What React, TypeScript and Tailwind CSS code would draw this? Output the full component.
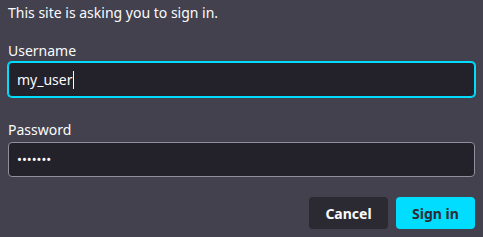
import React from "react";

export default function App() {
  return (
    <div
      className="w-[483px] h-[237px] bg-[#42414d] text-[#fbfbfe] px-2 pt-[3px] overflow-hidden"
      style={{ fontFamily: '"Noto Sans", "Open Sans", sans-serif' }}
    >
      <p className="text-[14px] leading-[20px]">This site is asking you to sign in.</p>
      <div className="mt-[18px] text-[14px] leading-[20px] mb-px">Username</div>
      <div className="h-[35px] rounded-[4px] bg-[#23222b] border border-[#00ddff] shadow-[0_0_0_1px_#00ddff] flex items-center pl-[8px] text-[14px]">
        <span>my_user</span>
        <span className="w-px h-[18px] bg-[#fbfbfe] ml-px" />
      </div>
      <div className="mt-[23px] text-[14px] leading-[20px] mb-[2px]">Password</div>
      <div className="h-[35px] rounded-[4px] bg-[#23222b] border border-[#8f8f9d] flex items-center pl-[8px] text-[13px]">
        •••••••
      </div>
      <div className="mt-[20px] flex justify-end gap-2">
        <button className="w-[79px] h-[32px] rounded-[4px] bg-[#2b2a33] text-[#fbfbfe] font-bold text-[14px]">
          Cancel
        </button>
        <button className="w-[79px] h-[32px] rounded-[4px] bg-[#00ddff] text-[#2b2a33] font-bold text-[14px]">
          Sign in
        </button>
      </div>
    </div>
  );
}
